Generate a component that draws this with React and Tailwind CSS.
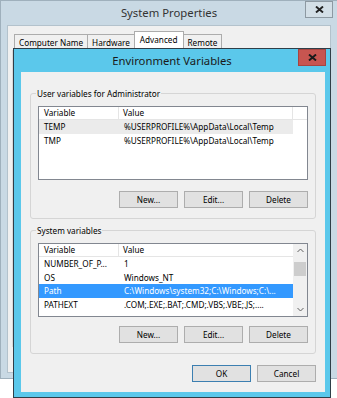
import React from "react";

function CloseX({ color = "#000" }) {
  return (
    <svg width="9" height="7" viewBox="0 0 9 7">
      <path d="M1 0.5 L8 6.5 M8 0.5 L1 6.5" stroke={color} strokeWidth="1.9" fill="none" />
    </svg>
  );
}

function Chevron({ up }) {
  return (
    <svg width="7" height="5" viewBox="0 0 7 5">
      <polyline
        points={up ? "0.5,4 3.5,1 6.5,4" : "0.5,1 3.5,4 6.5,1"}
        stroke="#606060"
        strokeWidth="1"
        fill="none"
      />
    </svg>
  );
}

function Btn({ children, def }) {
  return (
    <div
      className={
        "flex h-[17px] w-[59px] items-center justify-center border bg-[#e1e1e1] " +
        (def ? "border-[#3c7fb1]" : "border-[#adadad]")
      }
    >
      {children}
    </div>
  );
}

function Header({ withScroll }) {
  return (
    <div className="flex h-[13px] border-b border-[#e5e5e5]">
      <div className="flex w-[80px] items-center border-r border-[#e5e5e5] pl-[5px]">Variable</div>
      <div className={"flex w-[174px] items-center pl-[4px] " + (withScroll ? "" : "border-r border-[#e5e5e5]")}>
        Value
      </div>
    </div>
  );
}

function Row({ a, b, sel, inactiveSel, h }) {
  const cls = sel
    ? "bg-[#3399ff] text-white"
    : inactiveSel
    ? "bg-[#ebebeb]"
    : "";
  return (
    <div className={"flex w-[254px] " + h + " " + cls}>
      <div className="flex w-[80px] items-center overflow-hidden whitespace-nowrap pl-[5px]">{a}</div>
      <div className="flex w-[174px] items-center overflow-hidden whitespace-nowrap pl-[5px]">{b}</div>
    </div>
  );
}

function ButtonsRow({ mt }) {
  return (
    <div className={"flex justify-end gap-[6px] " + mt}>
      <Btn>New...</Btn>
      <Btn>Edit...</Btn>
      <Btn>Delete</Btn>
    </div>
  );
}

export default function App() {
  return (
    <div className="relative h-[398px] w-[337px] overflow-hidden bg-white font-['Noto_Sans',sans-serif] text-[8.2px] leading-[12px] text-black">
      {/* System Properties window (inactive, behind) */}
      <div className="flex h-[379px] w-[337px] flex-col border-b border-l border-t border-[#9fb0bc] bg-[#c9d9e4]">
        <div className="grid h-[24px] grid-cols-[1fr_auto_1fr]">
          <div />
          <div className="flex items-center text-[11.3px] text-[#333333]">System Properties</div>
          <div className="flex justify-end pr-[4px]">
            <div className="flex h-[17px] w-[28px] items-center justify-center border border-[#8d99a2] bg-[#d3dfe7]">
              <CloseX color="#222" />
            </div>
          </div>
        </div>
        <div className="mx-[6px] mb-[5px] flex flex-1 flex-col border border-[#b3c2cc] bg-[#f0f0f0] pt-[5px]">
          <div className="flex items-end pl-[6px]">
            <div className="flex h-[16px] items-center border border-b-0 border-[#acacac] bg-[#f0f0f0] px-[4px]">Computer Name</div>
            <div className="-ml-px flex h-[16px] items-center border border-b-0 border-[#acacac] bg-[#f0f0f0] px-[4px]">Hardware</div>
            <div className="-ml-px flex h-[19px] items-center border border-b-0 border-[#acacac] bg-white px-[5px] pb-[2px]">Advanced</div>
            <div className="-ml-px flex h-[16px] items-center border border-b-0 border-[#acacac] bg-[#f0f0f0] px-[4px]">Remote</div>
          </div>
          <div className="mx-[4px] h-[297px] border border-[#d9d9d9] bg-white" />
        </div>
      </div>

      {/* Environment Variables dialog (active, on top) */}
      <div className="absolute left-[13px] top-[48px] flex h-[350px] w-[318px] flex-col border border-[#2f3e48] bg-[#5bc8eb]">
        <div className="grid h-[23px] grid-cols-[1fr_auto_1fr]">
          <div />
          <div className="flex items-center text-[11.3px] text-[#1a1a1a]">Environment Variables</div>
          <div className="flex justify-end pr-[4px]">
            <div className="flex h-[17px] w-[28px] items-center justify-center border border-[#a8443f] bg-[#c75550]">
              <CloseX color="#1a1a1a" />
            </div>
          </div>
        </div>
        <div className="mb-[5px] ml-[7px] mr-[5px] flex flex-1 flex-col bg-[#f0f0f0]">
          {/* User variables */}
          <fieldset className="mx-[9px] mt-[15px] rounded-[3px] border border-[#d5d5d5] px-[7px] pb-[10px] pt-[6px]">
            <legend className="ml-[-2px] px-[1px] leading-[13px]">User variables for Administrator</legend>
            <div className="h-[74px] border border-[#828790] bg-white">
              <Header />
              <Row a="TEMP" b="%USERPROFILE%\AppData\Local\Temp" inactiveSel h="h-[14px]" />
              <Row a="TMP" b="%USERPROFILE%\AppData\Local\Temp" h="h-[14px]" />
            </div>
            <ButtonsRow mt="mt-[11px]" />
          </fieldset>

          {/* System variables */}
          <fieldset className="mx-[9px] mt-[5px] rounded-[3px] border border-[#d5d5d5] px-[7px] pb-[10px] pt-[6px]">
            <legend className="ml-[-2px] px-[1px] leading-[13px]">System variables</legend>
            <div className="flex h-[74px] border border-[#828790] bg-white">
              <div className="w-[254px]">
                <Header withScroll />
                <Row a="NUMBER_OF_P..." b="1" h="h-[13.7px]" />
                <Row a="OS" b="Windows_NT" h="h-[13.7px]" />
                <Row a="Path" b="C:\Windows\system32;C:\Windows;C:\..." sel h="h-[13.7px]" />
                <Row a="PATHEXT" b=".COM;.EXE;.BAT;.CMD;.VBS;.VBE;.JS;...." h="h-[13.7px]" />
              </div>
              <div className="flex w-[14px] flex-col bg-[#f0f0f0]">
                <div className="flex h-[13px] items-center justify-center">
                  <Chevron up />
                </div>
                <div className="mx-[1px] mt-[5px] h-[14px] bg-[#cdcdcd]" />
                <div className="flex-1" />
                <div className="flex h-[13px] items-center justify-center">
                  <Chevron />
                </div>
              </div>
            </div>
            <ButtonsRow mt="mt-[9px]" />
          </fieldset>

          <div className="mr-[9px] mt-[11px] flex justify-end gap-[6px]">
            <Btn def>OK</Btn>
            <Btn>Cancel</Btn>
          </div>
        </div>
      </div>
    </div>
  );
}
